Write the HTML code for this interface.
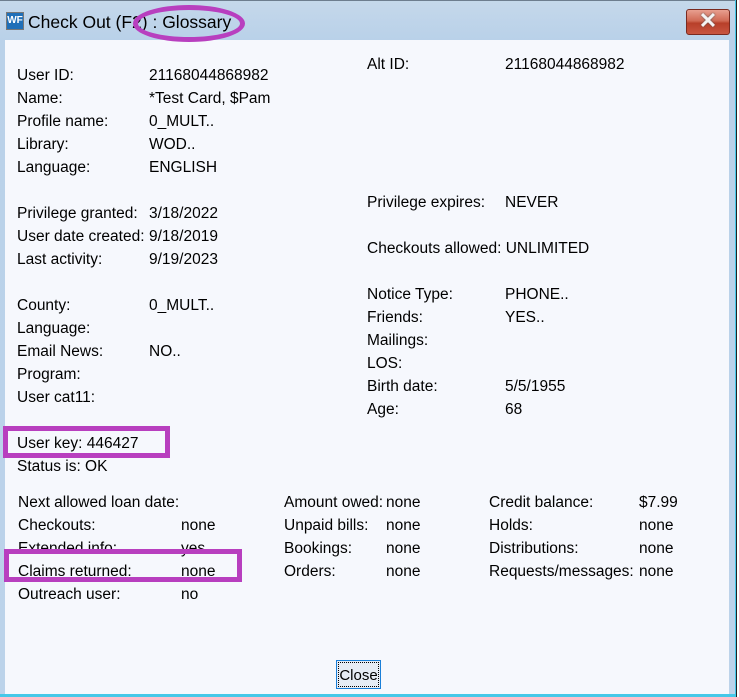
<!DOCTYPE html>
<html><head><style>
body{margin:0;width:739px;height:697px;position:relative;overflow:hidden;background:#fff;font-family:"Liberation Sans",Arial,sans-serif;}
.t{position:absolute;font-size:15.5px;line-height:18px;color:#000;white-space:nowrap;margin-top:2px}
</style></head><body>
<div style="position:absolute;left:0;top:0;width:735px;height:697px;background:linear-gradient(#c5d8ea,#b9d1e9 40px,#bcd3ea)"></div>
<div style="position:absolute;left:0;top:0;width:735px;height:1px;background:#6d7d8e"></div>
<div style="position:absolute;left:735px;top:0;width:1px;height:697px;background:#46c8e8"></div>
<div style="position:absolute;left:736px;top:0;width:1px;height:697px;background:#222"></div>
<div style="position:absolute;left:0;top:694px;width:736px;height:3px;background:#46c8e8"></div>
<div style="position:absolute;left:5px;top:40px;width:724px;height:654px;background:#f6f8fd"></div>
<div style="position:absolute;left:6px;top:12px;width:16px;height:16px;background:#1f6fb8;border:1px solid #777;color:#fff;font:bold 10px 'Liberation Sans';line-height:16px;text-align:center">WF</div>
<div class="t" style="left:28px;top:10px;font-size:17.5px;line-height:20px">Check Out (F2) : Glossary</div>
<div style="position:absolute;left:133px;top:5px;width:112px;height:37px;border:5px solid #b83fbf;border-radius:50%;box-sizing:border-box"></div>
<div style="position:absolute;left:686px;top:9px;width:44px;height:26px;border:1px solid #7a2a20;border-radius:3px;background:linear-gradient(#e8a090,#d06a55 45%,#b8402a 55%,#c85540);box-sizing:border-box"></div>
<div style="position:absolute;left:686px;top:6px;width:44px;height:28px;color:#f4f4f4;font:bold 22px 'Liberation Sans';text-align:center;line-height:30px;text-shadow:0 0 2px #555">✕</div>

<div class="t" style="left:17px;top:65px">User ID:</div><div class="t" style="left:149px;top:65px">21168044868982</div>
<div class="t" style="left:17px;top:88px">Name:</div><div class="t" style="left:149px;top:88px">*Test Card, $Pam</div>
<div class="t" style="left:17px;top:111px">Profile name:</div><div class="t" style="left:149px;top:111px">0_MULT..</div>
<div class="t" style="left:17px;top:134px">Library:</div><div class="t" style="left:149px;top:134px">WOD..</div>
<div class="t" style="left:17px;top:157px">Language:</div><div class="t" style="left:149px;top:157px">ENGLISH</div>
<div class="t" style="left:17px;top:203px">Privilege granted:</div><div class="t" style="left:149px;top:203px">3/18/2022</div>
<div class="t" style="left:17px;top:226px">User date created:</div><div class="t" style="left:149px;top:226px">9/18/2019</div>
<div class="t" style="left:17px;top:249px">Last activity:</div><div class="t" style="left:149px;top:249px">9/19/2023</div>
<div class="t" style="left:17px;top:295px">County:</div><div class="t" style="left:149px;top:295px">0_MULT..</div>
<div class="t" style="left:17px;top:318px">Language:</div>
<div class="t" style="left:17px;top:341px">Email News:</div><div class="t" style="left:149px;top:341px">NO..</div>
<div class="t" style="left:17px;top:364px">Program:</div>
<div class="t" style="left:17px;top:387px">User cat11:</div>
<div class="t" style="left:17px;top:433px">User key: 446427</div>
<div class="t" style="left:17px;top:456px">Status is: OK</div>

<div class="t" style="left:367px;top:54px">Alt ID:</div><div class="t" style="left:505px;top:54px">21168044868982</div>
<div class="t" style="left:367px;top:192px">Privilege expires:</div><div class="t" style="left:505px;top:192px">NEVER</div>
<div class="t" style="left:367px;top:238px">Checkouts allowed: UNLIMITED</div>
<div class="t" style="left:367px;top:284px">Notice Type:</div><div class="t" style="left:505px;top:284px">PHONE..</div>
<div class="t" style="left:367px;top:307px">Friends:</div><div class="t" style="left:505px;top:307px">YES..</div>
<div class="t" style="left:367px;top:330px">Mailings:</div>
<div class="t" style="left:367px;top:353px">LOS:</div>
<div class="t" style="left:367px;top:376px">Birth date:</div><div class="t" style="left:505px;top:376px">5/5/1955</div>
<div class="t" style="left:367px;top:399px">Age:</div><div class="t" style="left:505px;top:399px">68</div>

<div class="t" style="left:18px;top:492px">Next allowed loan date:</div>
<div class="t" style="left:18px;top:515px">Checkouts:</div><div class="t" style="left:181px;top:515px">none</div>
<div class="t" style="left:18px;top:538px">Extended info:</div><div class="t" style="left:181px;top:538px">yes</div>
<div class="t" style="left:18px;top:561px">Claims returned:</div><div class="t" style="left:181px;top:561px">none</div>
<div class="t" style="left:18px;top:584px">Outreach user:</div><div class="t" style="left:181px;top:584px">no</div>

<div class="t" style="left:284px;top:492px">Amount owed:</div><div class="t" style="left:386px;top:492px">none</div>
<div class="t" style="left:284px;top:515px">Unpaid bills:</div><div class="t" style="left:386px;top:515px">none</div>
<div class="t" style="left:284px;top:538px">Bookings:</div><div class="t" style="left:386px;top:538px">none</div>
<div class="t" style="left:284px;top:561px">Orders:</div><div class="t" style="left:386px;top:561px">none</div>

<div class="t" style="left:489px;top:492px">Credit balance:</div><div class="t" style="left:639px;top:492px">$7.99</div>
<div class="t" style="left:489px;top:515px">Holds:</div><div class="t" style="left:639px;top:515px">none</div>
<div class="t" style="left:489px;top:538px">Distributions:</div><div class="t" style="left:639px;top:538px">none</div>
<div class="t" style="left:489px;top:561px">Requests/messages:</div><div class="t" style="left:639px;top:561px">none</div>

<div style="position:absolute;left:3px;top:426px;width:167px;height:32px;border:5px solid #b83fbf;box-sizing:border-box"></div>
<div style="position:absolute;left:4px;top:549px;width:238px;height:33px;border:5px solid #b83fbf;box-sizing:border-box"></div>

<div style="position:absolute;left:336px;top:660px;width:45px;height:29px;border:1px solid #1a7fd8;background:#e6ecf5;box-sizing:border-box">
<div style="position:absolute;left:1px;top:1px;right:1px;bottom:1px;border:1px dotted #000"></div>
<div class="t" style="left:0;width:43px;text-align:center;top:4px;font-size:15px">Close</div></div>
</body></html>
